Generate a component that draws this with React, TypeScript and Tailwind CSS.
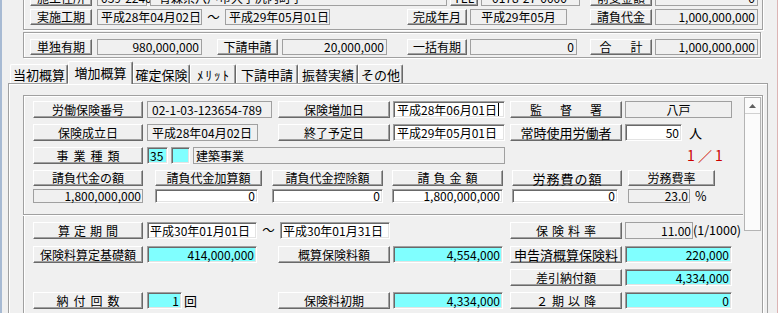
import type { ReactNode } from "react";

type Box = { cls?: string; children?: ReactNode };

const etched = "border border-[#a0a0a0] shadow-[inset_1px_1px_0_#ffffff,1px_1px_0_#ffffff]";

function Btn({ cls = "", children }: Box) {
  return (
    <div
      className={`flex shrink-0 items-center justify-center whitespace-nowrap border border-t-white border-l-white border-r-[#696969] border-b-[#696969] bg-[#f0f0f0] text-[12px] leading-none shadow-[inset_-1px_-1px_0_#a0a0a0] ${cls}`}
    >
      {children}
    </div>
  );
}

function Ro({ cls = "", children }: Box) {
  return (
    <div
      className={`flex shrink-0 items-center whitespace-nowrap border border-[#a0a0a0] bg-[#f0f0f0] text-[12px] leading-none ${cls}`}
    >
      {children}
    </div>
  );
}

function Ed({ cls = "", children }: Box) {
  return (
    <div
      className={`flex shrink-0 items-center whitespace-nowrap border border-[#a0a0a0] border-r-white border-b-white bg-white text-[12px] leading-none shadow-[inset_1px_1px_0_#696969,inset_-1px_-1px_0_#e3e3e3] ${cls}`}
    >
      {children}
    </div>
  );
}

function Cy({ cls = "", children }: Box) {
  return (
    <div
      className={`flex shrink-0 items-center whitespace-nowrap border border-[#a0a0a0] border-r-white border-b-white bg-[#80ffff] text-[12px] leading-none shadow-[inset_1px_1px_0_#696969,inset_-1px_-1px_0_#e3e3e3] ${cls}`}
    >
      {children}
    </div>
  );
}

function Txt({ cls = "", children }: Box) {
  return <div className={`flex shrink-0 items-center whitespace-nowrap text-[12.5px] leading-none ${cls}`}>{children}</div>;
}

function Tab({ cls = "", on = false, children }: Box & { on?: boolean }) {
  return on ? (
    <div
      className={`relative z-10 -mb-px flex h-[23px] shrink-0 items-center justify-center whitespace-nowrap rounded-t-[2px] border border-b-0 border-t-white border-l-white border-r-[#696969] bg-[#f0f0f0] pb-[2px] text-[13px] leading-none shadow-[inset_-1px_0_0_#a0a0a0] ${cls}`}
    >
      {children}
    </div>
  ) : (
    <div
      className={`flex h-[19px] shrink-0 items-center justify-center whitespace-nowrap rounded-t-[2px] border border-b-0 border-t-white border-l-white border-r-[#696969] bg-[#f0f0f0] text-[13px] leading-none shadow-[inset_-1px_0_0_#a0a0a0] ${cls}`}
    >
      {children}
    </div>
  );
}

export default function App() {
  return (
    <div className="h-[313px] w-[778px] overflow-hidden bg-[#f0f0f0] font-['Noto_Sans_CJK_JP',sans-serif] text-black shadow-[inset_2px_0_0_#a7bad3,inset_-1px_0_0_#dcb4b4]">
      {/* 工事情報 */}
      <div className={`ml-[23px] mt-[-20px] flex h-[50px] w-[740px] flex-col pt-[9px] ${etched}`}>
        <div className="flex h-[16px]">
          <Btn cls="ml-[6px] w-[62px]">施工住所</Btn>
          <Ro cls="ml-[5px] w-[50px] pl-[3px]">039-2240</Ro>
          <Ro cls="ml-[3px] w-[297px] pl-[8px]">青森県八戸市大字尻内町字</Ro>
          <Btn cls="ml-[3px] w-[28px]">TEL</Btn>
          <Ro cls="ml-[3px] w-[99px] pl-[10px]">0178-27-0000</Ro>
          <Btn cls="ml-[10px] w-[62px]">前受金額</Btn>
          <Ro cls="ml-[3px] w-[103px] justify-end pr-[2px]">0</Ro>
        </div>
        <div className="mt-[3px] flex h-[16px]">
          <Btn cls="ml-[6px] w-[62px]">実施工期</Btn>
          <Ro cls="ml-[5px] w-[105px] pl-[3px]">平成28年04月02日</Ro>
          <Txt cls="w-[23px] justify-center">～</Txt>
          <Ro cls="w-[105px] pl-[3px]">平成29年05月01日</Ro>
          <Btn cls="ml-[77px] w-[60px]">完成年月</Btn>
          <Ro cls="ml-[3px] w-[97px] justify-center">平成29年05月</Ro>
          <Btn cls="ml-[23px] w-[62px]">請負代金</Btn>
          <Ro cls="ml-[3px] w-[103px] justify-end pr-[2px]">1,000,000,000</Ro>
        </div>
      </div>

      <div className={`ml-[23px] mt-[2px] flex h-[26px] w-[738px] flex-col pt-[6px] ${etched}`}>
        <div className="flex h-[16px]">
          <Btn cls="ml-[6px] w-[62px]">単独有期</Btn>
          <Ro cls="ml-[5px] w-[105px] justify-end pr-[2px]">980,000,000</Ro>
          <Btn cls="ml-[15px] w-[61px]">下請申請</Btn>
          <Ro cls="ml-[4px] w-[105px] justify-end pr-[2px]">20,000,000</Ro>
          <Btn cls="ml-[20px] w-[60px]">一括有期</Btn>
          <Ro cls="ml-[3px] w-[107px] justify-end pr-[2px]">0</Ro>
          <Btn cls="ml-[13px] w-[62px] tracking-[19px] pl-[19px]">合計</Btn>
          <Ro cls="ml-[3px] w-[103px] justify-end pr-[2px]">1,000,000,000</Ro>
        </div>
      </div>

      {/* タブ */}
      <div className="mt-[3px] flex h-[22px] items-end">
        <Tab cls="ml-[10px] w-[58px]">当初概算</Tab>
        <Tab on cls="w-[65px]">増加概算</Tab>
        <Tab cls="w-[57px]">確定保険</Tab>
        <Tab cls="w-[46px] tracking-[2px] pl-[2px]">ﾒﾘｯﾄ</Tab>
        <Tab cls="w-[62px]">下請申請</Tab>
        <Tab cls="w-[60px]">振替実績</Tab>
        <Tab cls="w-[45px]">その他</Tab>
      </div>

      <div className="ml-[8px] h-[240px] w-[760px] border border-b-0 border-[#a0a0a0] pt-[11px] shadow-[inset_1px_1px_0_#ffffff]">
        <div className={`ml-[14px] flex h-[230px] w-[740px] ${etched}`}>
          <div className="flex w-[719px] shrink-0 flex-col pt-[5px]">
            {/* 保険情報 */}
            <div className="flex h-[17px]">
              <Btn cls="ml-[9px] w-[110px]">労働保険番号</Btn>
              <Ro cls="ml-[4px] w-[125px] pl-[4px]">02-1-03-123654-789</Ro>
              <Btn cls="ml-[6px] w-[112px]">保険増加日</Btn>
              <Ed cls="ml-[3px] w-[112px] pl-[3px]">
                平成28年06月01日
                <span className="ml-px h-[13px] w-px bg-black" />
              </Ed>
              <Btn cls="ml-[5px] w-[112px] tracking-[18px] pl-[18px]">監督署</Btn>
              <Ro cls="ml-[3px] w-[107px] justify-center">八戸</Ro>
            </div>
            <div className="mt-[6px] flex h-[17px]">
              <Btn cls="ml-[9px] w-[110px]">保険成立日</Btn>
              <Ro cls="ml-[4px] w-[111px] pl-[4px]">平成28年04月02日</Ro>
              <Btn cls="ml-[20px] w-[112px]">終了予定日</Btn>
              <Ed cls="ml-[3px] w-[112px] pl-[3px]">平成29年05月01日</Ed>
              <Btn cls="ml-[5px] w-[112px] text-[13px]">常時使用労働者</Btn>
              <Ed cls="ml-[3px] w-[57px] justify-end pr-[2px]">50</Ed>
              <Txt cls="ml-[7px] text-[13px]">人</Txt>
            </div>
            <div className="mt-[6px] flex h-[17px]">
              <Btn cls="ml-[9px] w-[110px] tracking-[5px] pl-[5px]">事業種類</Btn>
              <Cy cls="ml-[4px] w-[21px] pl-[2px] text-[11.5px]">35</Cy>
              <Cy cls="ml-[3px] w-[19px]" />
              <Ro cls="ml-[3px] w-[312px] pl-[2px] text-[12.5px]">建築事業</Ro>
              <Txt cls="ml-[182px] pb-[2px] text-[14px] text-[#cc0000]">1 ／ 1</Txt>
            </div>
            <div className="mt-[6px] flex h-[16px]">
              <Btn cls="ml-[9px] w-[110px]">請負代金の額</Btn>
              <Btn cls="ml-[12px] w-[107px]">請負代金加算額</Btn>
              <Btn cls="ml-[10px] w-[111px]">請負代金控除額</Btn>
              <Btn cls="ml-[9px] w-[111px] tracking-[4px] pl-[4px]">請負金額</Btn>
              <Btn cls="ml-[9px] w-[110px] text-[13px] tracking-[1px] pl-[1px]">労務費の額</Btn>
              <Btn cls="ml-[6px] w-[87px]">労務費率</Btn>
            </div>
            <div className="mt-[3px] flex h-[14px]">
              <Ro cls="ml-[9px] w-[110px] justify-end pr-[1px]">1,800,000,000</Ro>
              <Ed cls="ml-[12px] w-[103px] justify-end pr-[2px]">0</Ed>
              <Ed cls="ml-[14px] w-[111px] justify-end pr-[2px]">0</Ed>
              <Ed cls="ml-[9px] w-[111px] justify-end pr-[2px]">1,800,000,000</Ed>
              <Ed cls="ml-[9px] w-[106px] justify-end pr-[2px]">0</Ed>
              <Ro cls="ml-[10px] w-[62px] justify-end pr-[1px]">23.0</Ro>
              <Txt cls="ml-[5px]">%</Txt>
            </div>

            <div className="mt-[11px] ml-[-1px] h-[2px] w-[720px] border-t border-[#a0a0a0] shadow-[inset_0_1px_0_#ffffff]" />

            {/* 保険料計算 */}
            <div className="mt-[6px] flex h-[17px]">
              <Btn cls="ml-[9px] w-[110px] tracking-[4px] pl-[4px]">算定期間</Btn>
              <Ed cls="ml-[4px] w-[110px] pl-[2px]">平成30年01月01日</Ed>
              <Txt cls="w-[23px] justify-center">～</Txt>
              <Ed cls="w-[110px] pl-[2px]">平成30年01月31日</Ed>
              <Btn cls="ml-[120px] w-[112px] tracking-[4px] pl-[4px]">保険料率</Btn>
              <Ro cls="ml-[3px] w-[68px] justify-end pr-[1px]">11.00</Ro>
              <Txt>(1/1000)</Txt>
            </div>
            <div className="mt-[7px] flex h-[17px]">
              <Btn cls="ml-[9px] w-[110px]">保険料算定基礎額</Btn>
              <Cy cls="ml-[4px] w-[110px] justify-end pr-[2px]">414,000,000</Cy>
              <Btn cls="ml-[21px] w-[112px]">概算保険料額</Btn>
              <Cy cls="ml-[3px] w-[110px] justify-end pr-[2px]">4,554,000</Cy>
              <Btn cls="ml-[7px] w-[112px] text-[13px]">申告済概算保険料</Btn>
              <Cy cls="ml-[3px] w-[107px] justify-end pr-[2px]">220,000</Cy>
            </div>
            <div className="mt-[6px] flex h-[17px]">
              <Btn cls="ml-[486px] w-[112px]">差引納付額</Btn>
              <Cy cls="ml-[3px] w-[107px] justify-end pr-[2px]">4,334,000</Cy>
            </div>
            <div className="mt-[6px] flex h-[17px]">
              <Btn cls="ml-[9px] w-[110px] tracking-[5px] pl-[5px]">納付回数</Btn>
              <Cy cls="ml-[4px] w-[35px] justify-end pr-[2px]">1</Cy>
              <Txt cls="ml-[2px] w-[20px] text-[13px]">回</Txt>
              <Btn cls="ml-[74px] w-[112px]">保険料初期</Btn>
              <Cy cls="ml-[3px] w-[110px] justify-end pr-[2px]">4,334,000</Cy>
              <Btn cls="ml-[7px] w-[112px] tracking-[4px] pl-[4px]">２期以降</Btn>
              <Cy cls="ml-[3px] w-[107px] justify-end pr-[2px]">0</Cy>
            </div>
          </div>

          {/* スクロールバー */}
          <div className="ml-px mt-px flex h-[134px] w-[17px] shrink-0 flex-col border border-[#b4b4b4] bg-[#fbfbfb]">
            <div className="flex h-[16px] items-center justify-center border-b border-[#d0d0d0]">
              <svg width="7" height="4" viewBox="0 0 7 4">
                <path d="M0 4 L3.5 0 L7 4 Z" fill="#606060" />
              </svg>
            </div>
          </div>
        </div>
      </div>
    </div>
  );
}
